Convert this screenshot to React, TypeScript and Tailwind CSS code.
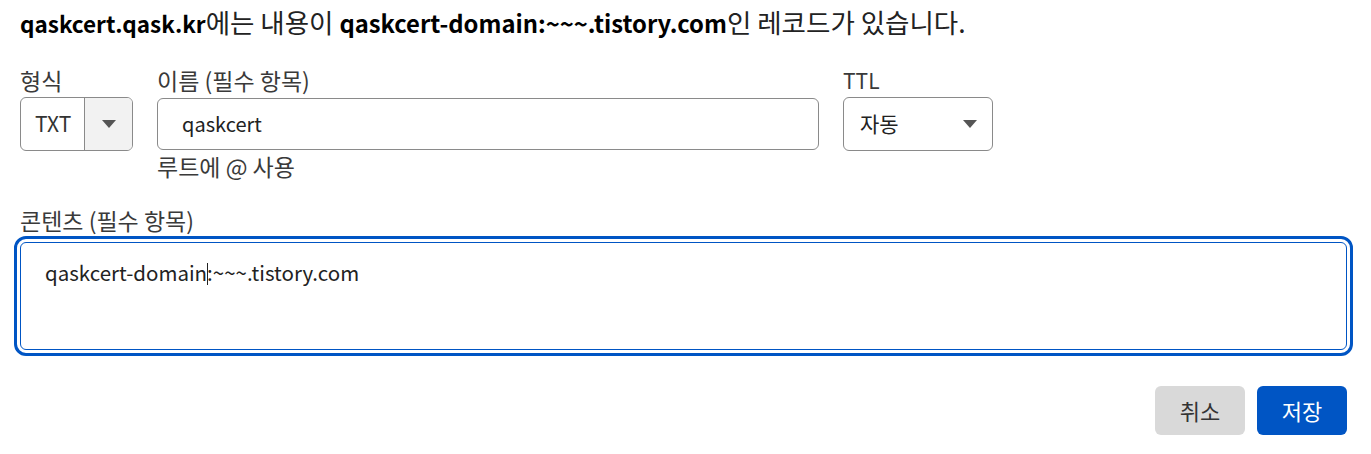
import React from 'react';

const font = { fontFamily: '"Noto Sans CJK KR", "Noto Sans", sans-serif' };

function Caret() {
  return <span className="inline-block w-px h-[22px] bg-[#222] align-[-4px] -mr-px" />;
}

function Arrow() {
  return (
    <svg width="14" height="8" viewBox="0 0 14 8">
      <path d="M0 0 L14 0 L7 8 Z" fill="#555" />
    </svg>
  );
}

export default function App() {
  return (
    <div className="w-[1371px] h-[454px] bg-white pl-5 pr-6 pt-[7px] text-[#333]" style={font}>
      <p className="text-[26.5px] leading-[30px] text-[#222]">
        <b className="text-[22.5px] font-bold text-black">qaskcert.qask.kr</b>에는 내용이{' '}
        <b className="text-[23.8px] font-bold text-black">qaskcert-domain:~~~.tistory.com</b>인 레코드가 있습니다.
      </p>

      <div className="mt-[29px] flex gap-6">
        {/* 형식 */}
        <div className="flex flex-col">
          <label className="text-[23px] leading-[26px] text-[#3a3a3a]">형식</label>
          <div className="mt-[4px] flex h-[54px] w-[113px] overflow-hidden rounded-[6px] border border-[#8a8a8a]">
            <div className="flex w-[63px] items-center pl-[14px] text-[21px] text-[#333]">TXT</div>
            <div className="flex flex-1 items-center justify-center border-l border-[#8a8a8a] bg-[#f2f2f2]">
              <Arrow />
            </div>
          </div>
        </div>

        {/* 이름 */}
        <div className="flex flex-col">
          <label className="text-[23px] leading-[26px] text-[#3a3a3a]">이름 (필수 항목)</label>
          <div className="mt-[5px] flex h-[52px] w-[662px] items-center rounded-[6px] border border-[#8a8a8a] pl-6 text-[20px] text-[#222]">
            qaskcert
          </div>
          <span className="mt-[3px] text-[23px] leading-[26px] text-[#3a3a3a]">루트에 @ 사용</span>
        </div>

        {/* TTL */}
        <div className="flex flex-col">
          <label className="text-[21px] leading-[26px] text-[#3a3a3a]">TTL</label>
          <div className="mt-[4px] flex h-[54px] w-[150px] items-center justify-between rounded-[6px] border border-[#8a8a8a] pl-4 pr-[15px] text-[21px] text-[#222]">
            <span>자동</span>
            <Arrow />
          </div>
        </div>
      </div>

      {/* 콘텐츠 */}
      <div className="mt-[28px] flex flex-col">
        <label className="text-[23px] leading-[26px] text-[#3a3a3a]">콘텐츠 (필수 항목)</label>
        <div className="mt-[9px] h-[108px] w-full rounded-[6px] border border-[#0055c4] outline-3 outline-offset-3 outline-solid outline-[#0055c4] pl-6 pt-[15px] text-[20.5px] leading-[28px] text-[#222]">
          qaskcert-domain<Caret />:~~~.tistory.com
        </div>
      </div>

      <div className="mt-[36px] flex justify-end gap-3">
        <button className="h-[49px] w-[90px] rounded-[6px] bg-[#d9d9d9] text-[22px] text-[#333]">취소</button>
        <button className="h-[49px] w-[90px] rounded-[6px] bg-[#0055c4] text-[22px] text-white">저장</button>
      </div>
    </div>
  );
}
